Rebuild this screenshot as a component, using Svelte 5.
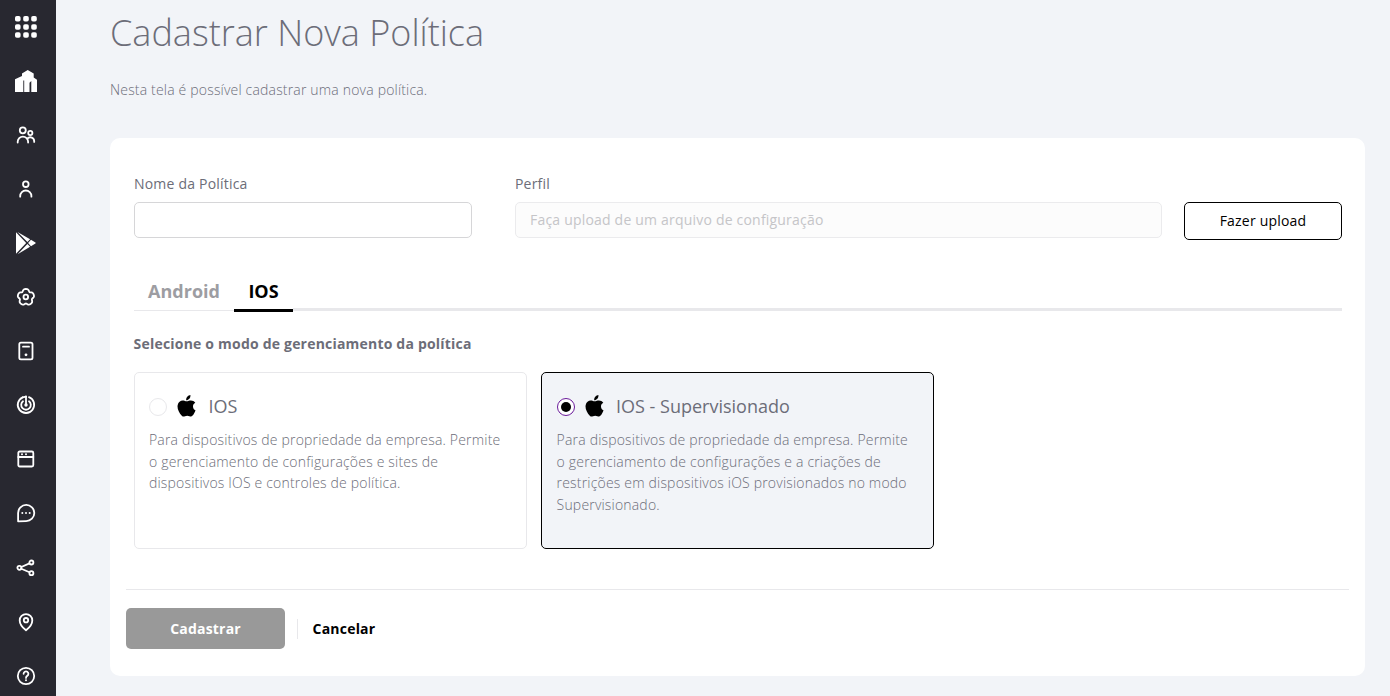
<script>
  const modes = [
    { id: 'ios', title: 'IOS', lines: ['Para dispositivos de propriedade da empresa. Permite', 'o gerenciamento de configurações e sites de', 'dispositivos IOS e controles de política.'] },
    { id: 'supervised', title: 'IOS - Supervisionado', lines: ['Para dispositivos de propriedade da empresa. Permite', 'o gerenciamento de configurações e a criações de', 'restrições em dispositivos iOS provisionados no modo', 'Supervisionado.'] }
  ];
  let selected = $state('supervised');
  const dots = [3.8, 12, 20];
  // five-lobed gear outline
  const gear = Array.from({ length: 80 }, (_, i) => {
    const t = (i / 80) * Math.PI * 2;
    const r = 7.5 + 0.95 * Math.cos(5 * t) - 0.25 * Math.cos(10 * t);
    return `${(11.9 + r * Math.sin(t)).toFixed(2)},${(12.2 - r * Math.cos(t)).toFixed(2)}`;
  }).join(' ');
</script>

<div class="page">
  <nav class="sidebar">
    <a href="#apps"><svg viewBox="0 0 24 24" class="solid">
      {#each dots as y}{#each dots as x}<rect x={x - 2.8} y={y - 2.8} width="5.6" height="5.6" rx="1.8" />{/each}{/each}
    </svg></a>
    <a href="#home"><svg viewBox="0 0 24 24" class="solid">
      <path d="M1 10.2 8 7V4.4L13.7 1l6 3.4v4.1L23 10.8V23h-5.7V12l-1.8 1.7V23h-5.3V11.5H9.3V23H1z" />
    </svg></a>
    <a href="#groups"><svg viewBox="0 0 24 24">
      <circle cx="8.8" cy="7.3" r="3" /><circle cx="16.3" cy="10" r="2.1" />
      <path d="M3.7 19.6v-.8a5.2 5.2 0 0 1 10.4 0v.8M13.5 15.5a3.9 3.9 0 0 1 6.7 2.8v.6" />
    </svg></a>
    <a href="#user"><svg viewBox="0 0 24 24">
      <circle cx="11.8" cy="7.2" r="2.8" /><path d="M6.2 19.7v-.6a5.6 5.6 0 0 1 11.2 0v.6" />
    </svg></a>
    <a href="#store"><svg viewBox="0 0 24 24" class="solid">
      <path d="M2 1.3 12.2 12 2 22.8zM3.5.9l12.6 7.3-2.7 2.8zM3.6 23.2 13.4 13l2.7 2.8zM17 8.8l4.4 2.6q.8.6 0 1.2L17 15.2 14.1 12z" />
    </svg></a>
    <a href="#settings"><svg viewBox="0 0 24 24">
      <polygon points={gear} /><circle cx="11.8" cy="12" r="2.3" />
    </svg></a>
    <a href="#devices"><svg viewBox="0 0 24 24">
      <rect x="5.3" y="3.6" width="13.2" height="16.8" rx="1.6" /><path d="M9 7.7h6" /><circle cx="12" cy="15.8" r="1.4" class="dot" />
    </svg></a>
    <a href="#radar"><svg viewBox="0 0 24 24">
      <path d="M15 4.2a8.2 8.2 0 1 1-6.3.1M12 3.5V12M15 8.2a4.8 4.8 0 1 1-6 0" /><circle cx="12" cy="12" r="1.7" class="dot" /><path d="M8.7 4.3 12 3.6" />
    </svg></a>
    <a href="#windows"><svg viewBox="0 0 24 24">
      <rect x="4.3" y="4.5" width="15" height="15" rx="1.4" /><path d="M4.3 10h15" /><circle cx="8" cy="7.2" r="1" class="dot" /><circle cx="12" cy="7.2" r="1" class="dot" />
    </svg></a>
    <a href="#chat"><svg viewBox="0 0 24 24">
      <path d="M4.1 20.3V12A8.1 8.1 0 1 1 12.2 20.1z" />
      <circle cx="8.3" cy="12" r="1" class="dot" /><circle cx="12" cy="12" r="1" class="dot" /><circle cx="15.7" cy="12" r="1" class="dot" />
    </svg></a>
    <a href="#share" class="lower"><svg viewBox="0 0 24 24">
      <circle cx="5.4" cy="11.8" r="2" /><circle cx="17.4" cy="6.5" r="2" /><circle cx="17.4" cy="17.2" r="2" /><path d="m7.3 11 8.2-3.6M7.3 12.7l8.2 3.6" />
    </svg></a>
    <a href="#location"><svg viewBox="0 0 24 24">
      <path d="M12 20.3c-3-2.4-6.3-5.8-6.3-9.9a6.3 6.3 0 0 1 12.6 0c0 4.1-3.3 7.5-6.3 9.9z" /><circle cx="12" cy="10.2" r="2.2" />
    </svg></a>
    <a href="#help"><svg viewBox="0 0 24 24">
      <circle cx="12" cy="12" r="8.2" /><path d="M9.6 9.8a2.4 2.4 0 1 1 3.6 2.1q-1.2.7-1.2 2" /><circle cx="12" cy="16.3" r="1" class="dot" />
    </svg></a>
  </nav>

  <main>
    <h1>Cadastrar Nova Política</h1>
    <p class="intro">Nesta tela é possível cadastrar uma nova política.</p>

    <section class="card">
      <div class="fields">
        <label class="name">Nome da Política<input type="text" /></label>
        <label class="profile">Perfil<input type="text" disabled placeholder="Faça upload de um arquivo de configuração" /></label>
        <button class="upload">Fazer upload</button>
      </div>

      <div class="tabs">
        <button class="tab">Android</button>
        <button class="tab active">IOS</button>
        <span class="rest"></span>
      </div>

      <h2>Selecione o modo de gerenciamento da política</h2>
      <div class="modes">
        {#each modes as mode}
          <label class="mode" class:selected={selected === mode.id}>
            <span class="head">
              <input type="radio" name="mode" value={mode.id} bind:group={selected} />
              <svg viewBox="0 0 18 22"><path d="M12.9.1c.2 1.4-.4 2.7-1.1 3.6-.8.9-2 1.6-3.1 1.5-.2-1.3.4-2.6 1.1-3.4C10.6.9 11.9.2 12.9.1zM17.8 7.7c-1.5.9-2.3 2.1-2.3 3.7 0 1.9 1.1 3.3 2.5 3.9-.6 1.9-1.6 3.9-2.9 5.3-.9 1-1.9 1.2-3.2.6-1.5-.7-2.9-.7-4.4 0-1.3.6-2.2.5-3.2-.5C1.4 17.8-.6 13.4.2 9.9c.7-3.5 3.9-5.1 6.8-4.1 1.8.7 2.5.7 4.3 0 2.4-.9 4.9-.3 6.5 1.9z" /></svg>
              <span>{mode.title}</span>
            </span>
            <span class="text">{#each mode.lines as line}<span>{line}</span>{/each}</span>
          </label>
        {/each}
      </div>

      <footer>
        <button class="submit">Cadastrar</button>
        <button class="cancel">Cancelar</button>
      </footer>
    </section>
  </main>
</div>

<style>
  :global(body) { background: #f2f4f8; overflow: hidden; }
  .page, .page * { box-sizing: border-box; }
  .page { display: flex; height: 696px; font-family: "Open Sans", sans-serif; font-size: 14px; color: #6c6d78; }
  button, input { font: inherit; letter-spacing: inherit; margin: 0; }
  button { padding: 0; border: 0; background: none; cursor: pointer; }

  .sidebar { flex: none; width: 56px; height: 696px; padding-left: 14px; background: #282830; overflow: hidden; }
  .sidebar a { display: flex; align-items: center; height: 54.04px; }
  .sidebar .lower { margin-top: .7px; }
  .sidebar svg { width: 24px; height: 24px; fill: none; stroke: #fff; stroke-width: 1.8; stroke-linecap: round; stroke-linejoin: round; }
  .sidebar .solid, .sidebar .dot { fill: #fff; stroke: none; }

  main { flex: 1; padding: 8px 25px 0 54px; }
  h1 { margin: 0; height: 50px; line-height: 50px; font-size: 36px; font-weight: 300; white-space: nowrap; }
  .intro { margin: 21px 0 0; height: 21px; line-height: 21px; font-weight: 300; letter-spacing: .18px; }

  .card { height: 538px; margin-top: 38px; padding: 35px 16px 0; border-radius: 10px; background: #fff; letter-spacing: .2px; }
  .fields { display: flex; padding: 0 7px 0 8px; }
  .fields label { display: flex; flex-direction: column; line-height: 21px; }
  .name { width: 338px; margin-right: 43px; }
  .profile { width: 647px; margin-right: 22px; }
  .fields input { width: 100%; height: 36px; margin-top: 8px; padding: 0 14px 2px; border: 1px solid #d6d6d8; border-radius: 5px; background: #fff; }
  .fields input:disabled { border-color: #ebebed; background: #fcfcfc; }
  .fields input::placeholder { color: #c5c5c8; opacity: 1; }
  .upload { width: 158px; height: 38px; margin-top: 29px; padding-bottom: 2px; border: 1px solid #000; border-radius: 5px; color: #000; }

  .tabs { display: flex; margin: 30px 7px 0 8px; height: 42px; letter-spacing: 0; }
  .tab { height: 41px; padding: 2px 14px 0; border-bottom: 1px solid #e8e8eb; font-size: 18px; font-weight: 700; color: #9d9da2; }
  .tab:first-child { width: 100px; }
  .tab.active { width: 59px; height: 42px; border-bottom: 3px solid #000; padding-top: 3px; color: #000; }
  .rest { flex: 1; height: 41px; border-bottom: 3px solid #e8e8eb; }

  h2 { margin: 21px 8px 0 7.6px; height: 21px; line-height: 21px; font-size: 14px; font-weight: 700; }
  .modes { display: flex; gap: 14px; margin: 18px 8px 0; }
  .mode { width: 393px; height: 177px; padding: 20px 14px 0; border: 1px solid #e8e8eb; border-radius: 5px; }
  .mode.selected { padding-left: 14.6px; border-color: #000; background: #f2f4f8; }
  .head { display: flex; align-items: center; height: 27px; font-size: 18px; line-height: 27px; letter-spacing: 0; }
  .head svg { width: 19px; height: 22px; margin: -2px 12.4px 0 10px; fill: #000; }
  .head input { appearance: none; width: 18px; height: 18px; border: 1px solid #e8e8eb; border-radius: 50%; background: #fff; display: grid; place-items: center; }
  .head input:checked { border-color: #6a1a9a; }
  .head input:checked::after { content: ""; width: 10px; height: 10px; border-radius: 50%; background: #000; }
  .text { display: flex; flex-direction: column; margin-top: 9px; font-weight: 300; line-height: 21.6px; letter-spacing: .185px; white-space: nowrap; }

  footer { display: flex; align-items: center; margin-top: 40px; padding-top: 18px; border-top: 1px solid #e8e8eb; }
  .submit { width: 159px; height: 41px; border-radius: 5px; background: #999; color: #fff; font-weight: 700; }
  .cancel { height: 20px; margin-left: 12px; padding-left: 14.6px; border-left: 1px solid #e8e8eb; color: #000; font-weight: 700; }
</style>
